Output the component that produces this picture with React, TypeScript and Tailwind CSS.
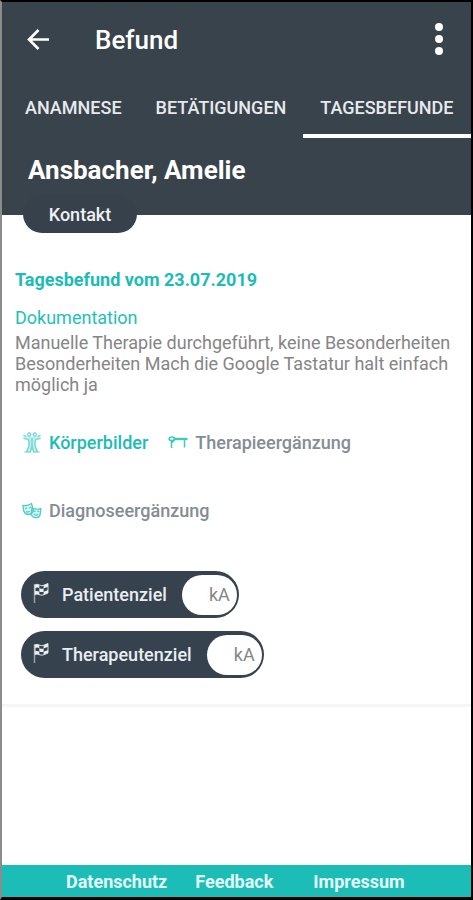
import React, { useState } from 'react';

const tabs = ['ANAMNESE', 'BETÄTIGUNGEN', 'TAGESBEFUNDE'];

const BackIcon = () => (
  <svg viewBox="0 0 24 24" className="w-6 h-6" fill="none" stroke="currentColor" strokeWidth="2.6">
    <path d="M23 11.500H4M12.500 2L3 11.500l9.500 9.500" />
  </svg>
);

const MoreIcon = () => (
  <svg viewBox="0 0 8 34" className="w-2 h-[34px]" fill="currentColor">
    <circle cx="4" cy="4" r="4" />
    <circle cx="4" cy="16" r="4" />
    <circle cx="4" cy="28" r="4" />
  </svg>
);

const BodyIcon = () => (
  <svg viewBox="0 0 20 24" className="w-5 h-6" fill="none" stroke="currentColor">
    <path
      d="M1.500 4.500L6 5.500h8l4.500-1v3L14 8.500l-.5 6 3 6.500h-5L10 17l-1.500 4h-5l3-6.500-.5-6-4.500-1z"
      fill="currentColor"
      strokeWidth="0"
      opacity="0.4"
    />
    <g strokeWidth="1.100">
      <circle cx="7.300" cy="3.500" r="1.600" />
      <circle cx="12.700" cy="3.500" r="1.600" />
      <path d="M1.500 4.500l3 .8M18.500 4.500l-3 .8M1.500 7.500L6 8.500l1 2v4.500L4.500 21M18.500 7.500L14 8.500l-1 2v4.500l2.500 6M10 7v8l-1.500 6M10 15l1.500 6" />
      <path d="M2.500 21h6.500M11 21h6.500" />
    </g>
  </svg>
);

const TableIcon = () => (
  <svg viewBox="0 0 20 14" className="w-5 h-[14px]" fill="none" stroke="currentColor">
    <ellipse cx="4" cy="2.800" rx="2.800" ry="1.800" strokeWidth="1.600" />
    <path d="M5.500 3H19.500" strokeWidth="2.400" />
    <path d="M3.500 4.500V12M16.500 4V11.500M3.500 7L6 4.500" strokeWidth="1.500" />
  </svg>
);

const MasksIcon = () => (
  <svg viewBox="0 0 20 20" className="w-5 h-5" fill="none" stroke="currentColor" strokeWidth="1.300">
    <path
      d="M1 4.500c3 .6 6-.2 8.500-2l1.500 5.500c.5 3-1.500 5-4 5.500C4 13.500 2 11.500 1.500 9z"
      fill="currentColor"
      fillOpacity="0.200"
    />
    <path
      d="M10 7c2.800 1.300 5.800 1.500 8.800.6l-.5 5.400c-.6 2.800-2.800 4-5.300 3.600-2.500-.5-4-2.500-3.700-5.200z"
      fill="currentColor"
      fillOpacity="0.200"
    />
    <path d="M3 7.500l2-.3M6.800 7l2-.8M4 10.500c1 .8 2.500.6 3.500-.5M11.500 10l2 .5M15.300 10.500l2-.2M11.800 12.800c1.200 1.500 3 1.700 4.500.5" />
  </svg>
);

const FlagIcon = () => (
  <svg viewBox="0 0 18 22" className="w-[18px] h-[22px]" fill="none" stroke="currentColor">
    <path d="M2.500 2v19" strokeWidth="1.500" opacity="0.55" />
    <path d="M3 3c3-2 5 1.500 8 .5l5-2v9.500l-5 2c-3 1-5-2-8-.5z" strokeWidth="0.900" />
    <path
      d="M3 3c1.500-1 3-.6 4.300 0v3.300C6 5.500 4.500 5.300 3 6.200zM11.600 3.400l4.400-1.900v3.200l-4.400 1.800zM7.300 6.300c1.400.5 2.800.8 4.300.2v3.200c-1.500.6-2.900.4-4.300-.2zM3 9.400c1.500-.8 3-.5 4.300.1v3.200c-1.300-.6-2.800-.9-4.300-.2zM11.600 9.700L16 7.900V11l-4.400 1.900z"
      fill="currentColor"
      strokeWidth="0"
    />
  </svg>
);

interface GoalProps {
  id: string;
  label: string;
}

const Goal = ({ id, label }: GoalProps) => {
  const [value, setValue] = useState('');

  return (
    <div className="flex items-center h-[47px] pl-[11px] pr-[2px] rounded-full bg-[#36424d] text-[18px] text-[#e9eef2]">
      <span className="pb-1">
        <FlagIcon />
      </span>
      <label htmlFor={id} className="ml-3 mr-[15px] font-medium">
        {label}
      </label>
      <input
        id={id}
        value={value}
        onChange={(e) => setValue(e.target.value)}
        placeholder="kA"
        className="w-[55px] h-10 pr-[7px] rounded-full bg-white text-right text-[#858585] placeholder:text-[#858585] outline-none"
      />
    </div>
  );
};

export default function App() {
  const [active, setActive] = useState('TAGESBEFUNDE');

  return (
    <div
      className="flex flex-col min-h-screen bg-white border-t-2 border-r-2 border-b-[3px] border-l-2 border-black border-l-[#8c8c8c]"
      style={{ fontFamily: 'Roboto, "Liberation Sans", sans-serif' }}
    >
      <header className="h-[213px] bg-[#39434c] text-white">
        <div className="flex items-center h-[76px] pl-6 pr-7">
          <button type="button" aria-label="Zurück">
            <BackIcon />
          </button>
          <h1 className="ml-[45px] text-[26px] font-medium">Befund</h1>
          <button type="button" aria-label="Menü" className="ml-auto">
            <MoreIcon />
          </button>
        </div>
        <nav className="flex h-[60px] pl-[6px] overflow-hidden text-[18px] font-medium text-[#e6eaed]">
          {tabs.map((tab) => (
            <button
              key={tab}
              type="button"
              onClick={() => setActive(tab)}
              className={`px-[17px] pt-0.5 border-b-4 ${active === tab ? 'border-white' : 'border-transparent'}`}
            >
              {tab}
            </button>
          ))}
        </nav>
        <h2 className="px-[26px] pt-4 text-[26px] leading-8 font-bold">Ansbacher, Amelie</h2>
        <button
          type="button"
          className="block w-[114px] h-[38px] mt-[9px] ml-[21px] rounded-[20px] bg-[#36414b] text-[18px] font-medium text-[#eef2f4]"
        >
          Kontakt
        </button>
      </header>

      <main className="flex-1">
        <section className="pt-[53px] pb-[26px] px-[13px] border-b-[3px] border-[#f6f6f6]">
          <h3 className="text-[18px] leading-6 font-bold text-[#1cbcb4]">Tagesbefund vom 23.07.2019</h3>
          <h4 className="mt-3 text-[18px] leading-7 text-[#1fc1b5]">Dokumentation</h4>
          <p className="text-[18px] leading-[21px] text-[#858585]">
            Manuelle Therapie durchgeführt, keine Besonderheiten Besonderheiten Mach die Google Tastatur halt
            einfach möglich ja
          </p>
          <div className="flex flex-wrap items-center mt-9 pl-[7px] gap-x-5 gap-y-11 text-[18px] leading-6 font-medium text-[#848c94]">
            <button type="button" className="flex items-center gap-[7px] text-[#1cbcb4]">
              <span className="text-[#62d2cf]">
                <BodyIcon />
              </span>
              Körperbilder
            </button>
            <button type="button" className="flex items-center gap-[7px]">
              <span className="text-[#3ccabf]">
                <TableIcon />
              </span>
              Therapieergänzung
            </button>
            <button type="button" className="flex items-center gap-[7px]">
              <span className="text-[#4ccdc8]">
                <MasksIcon />
              </span>
              Diagnoseergänzung
            </button>
          </div>
          <div className="flex flex-col items-start gap-[13px] mt-12 pl-[6px]">
            <Goal id="patientenziel" label="Patientenziel" />
            <Goal id="therapeutenziel" label="Therapeutenziel" />
          </div>
        </section>
      </main>

      <footer className="flex items-center h-8 pl-16 bg-[#1bbdb6] text-[18px] font-bold text-[#e4fbf9]">
        <a href="#datenschutz">Datenschutz</a>
        <a href="#feedback" className="ml-7">
          Feedback
        </a>
        <a href="#impressum" className="ml-10">
          Impressum
        </a>
      </footer>
    </div>
  );
}
